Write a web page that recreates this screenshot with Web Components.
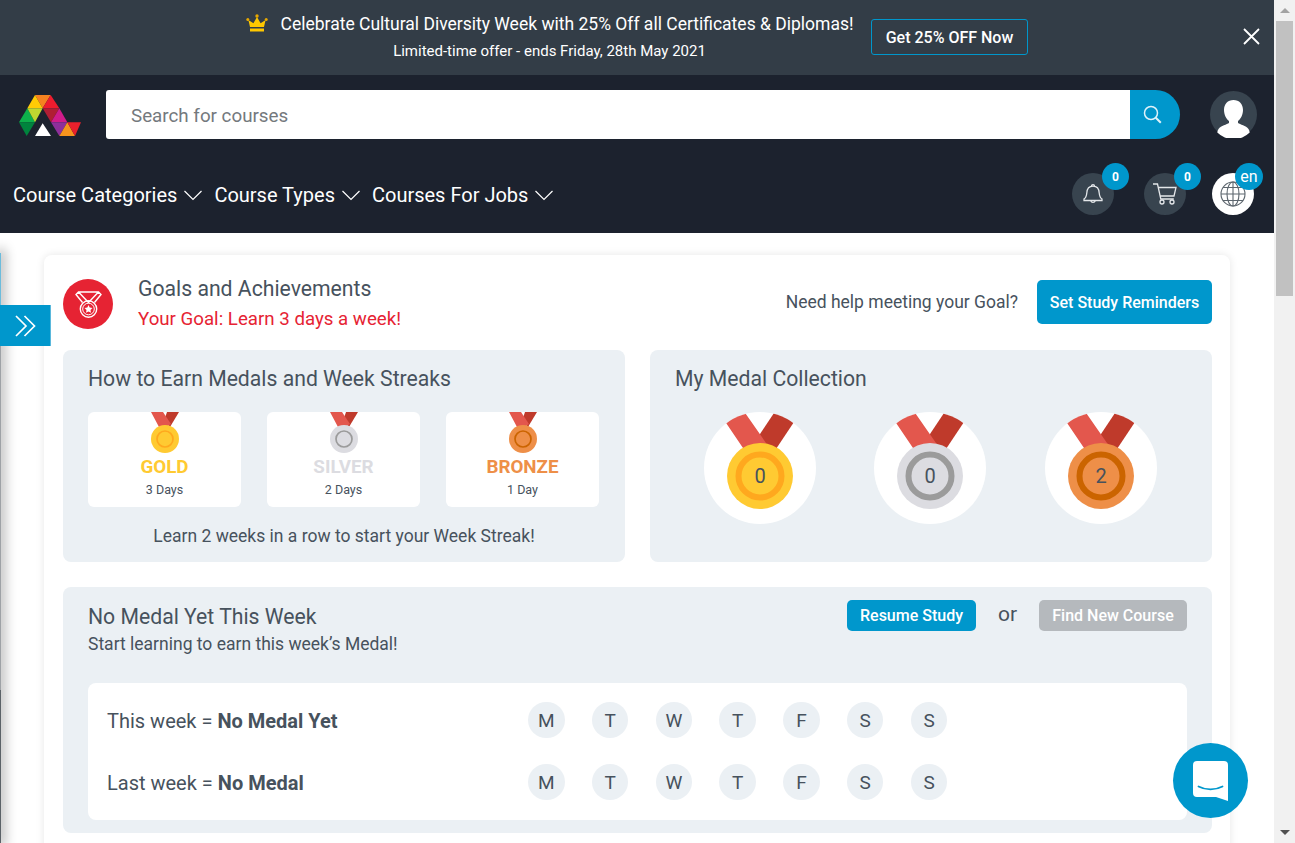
<!DOCTYPE html>
<html lang="en">
<head>
<meta charset="utf-8">
<title>Goals and Achievements</title>
<style>
  html, body { margin: 0; height: 100%; overflow: hidden; background: #fff; }
  body { font-family: Roboto, "Liberation Sans", sans-serif; color: #47525d; }
</style>
</head>
<body>
<app-shell>
  <promo-bar></promo-bar>
  <site-header></site-header>
  <goals-card></goals-card>
</app-shell>

<script>
const icon = {
  chevron: '<svg width="18" height="11" viewBox="0 0 18 11" fill="none" stroke="#fff" stroke-width="1.2"><path d="M.5 1L9 9.500 17.500 1"/></svg>',
  crown: '<svg width="22" height="18" viewBox="0 0 22 18"><path fill="#ffc800" d="M11 3l3.600 6.200L19.600 6 18 13H4L2.400 6l5 3.200z"/><rect x="4" y="14.500" width="14" height="3" fill="#ffc800"/><circle cx="11" cy="2" r="1.700" fill="#e8a800"/><circle cx="1.800" cy="5.500" r="1.500" fill="#e8a800"/><circle cx="20.200" cy="5.500" r="1.500" fill="#e8a800"/></svg>',
  close: '<svg width="17" height="17" viewBox="0 0 17 17" stroke="#fff" stroke-width="1.800"><path d="M1 1l15 15M16 1L1 16"/></svg>',
  search: '<svg width="19" height="19" viewBox="0 0 19 19" fill="none" stroke="#dff2fa" stroke-width="1.500"><circle cx="8" cy="8" r="6.500"/><path d="M12.800 12.800l5 5" stroke-width="2"/></svg>',
  user: '<svg width="47" height="47" viewBox="0 0 47 47"><circle cx="23.500" cy="23.500" r="23.500" fill="#38444f"/><path fill="#fff" d="M23.500 9c5.800 0 9.500 4 9.500 10 0 5-2.500 9-5 11v2c2 1.500 8 2.500 10.500 6 .8 1.200 1 2.500 1.200 3.500a23 23 0 0 1-32.400 0c.2-1 .4-2.300 1.200-3.500 2.500-3.500 8.500-4.500 10.500-6v-2c-2.500-2-5-6-5-11 0-6 3.700-10 9.500-10z"/></svg>',
  bell: '<svg width="20" height="23" viewBox="0 0 20 23" fill="none" stroke="#e4e7ea" stroke-width="1.300"><path d="M1 17.500h18v-1.500c-2-1-2.500-3-2.800-6C16 6 14 3.200 10 3.200S4 6 3.800 10C3.500 13 3 15 1 16z"/><path d="M8.500 3.200c0-2.200 3-2.200 3 0M7.800 17.700a2.300 2.300 0 0 0 4.400 0"/></svg>',
  cart: '<svg width="24" height="22" viewBox="0 0 24 22" fill="none" stroke="#e4e7ea" stroke-width="1.300"><path d="M0 1h4.500l3.300 15h13M5.200 4.500H23l-2 8.500H7.200"/><circle cx="9" cy="19" r="2"/><circle cx="19" cy="19" r="2"/></svg>',
  globe: '<svg width="26" height="26" viewBox="0 0 26 26" fill="none" stroke="#5d666e" stroke-width="1.100"><circle cx="13" cy="13" r="12"/><ellipse cx="13" cy="13" rx="6" ry="12"/><path d="M13 1v24M1 13h24M3 6.500h20M3 19.500h20"/></svg>',
  arrows: '<svg width="21" height="22" viewBox="0 0 21 22" fill="none" stroke="#fff" stroke-width="1.700"><path d="M1 1l10 10L1 21M9.500 1l10 10-10 10"/></svg>',
  badge: '<svg width="27" height="27" viewBox="0 0 27 27" fill="none" stroke="#fff" stroke-width="1.400"><path d="M7.500 11.500L1 3.500 3.500 1h20L26 3.500l-6.500 8M3.500 1l10 10.500L23.500 1"/><circle cx="13.500" cy="18" r="8.200"/><circle cx="13.500" cy="18" r="5.800" stroke-width="1"/><path fill="#fff" stroke="none" d="M13.500 14l1.200 2.500 2.800.4-2 2 .5 2.800-2.500-1.300-2.500 1.300.5-2.800-2-2 2.800-.4z"/></svg>',
  chat: '<svg width="35" height="40" viewBox="0 0 35 40"><path fill="#fff" d="M4 0h27a4 4 0 0 1 4 4v36l-12-4H4a4 4 0 0 1-4-4V4a4 4 0 0 1 4-4z"/><path fill="none" stroke="#0097cc" stroke-width="1.800" stroke-linecap="round" d="M5.500 25.500c7 3.800 17 3.800 24 0"/></svg>',
  logo: '<svg width="62" height="41" viewBox="57 285 186 123"><path fill="#f58220" d="M105 285h47l-24 40z"/><path fill="#ffcb05" d="M105 285l-23 40h46z"/><path fill="#ed1c2e" d="M152 285l-24 40h50z"/><path fill="#0db04b" d="M82 325l-25 42h48z"/><path fill="#bfd730" d="M82 325h46l-23 42z"/><path fill="#b01e34" d="M128 325h50l-25 42z"/><path fill="#d01c8b" d="M178 325l-25 42h49z"/><path fill="#00843d" d="M57 367h48l-25 41z"/><path fill="#8e2f9b" d="M153 367h49l-24 41z"/><path fill="#f7941d" d="M202 367l-24 41h47z"/><path fill="#e8212c" d="M202 367h41l-18 41z"/><path fill="#fff" d="M128 370l-23 38h48z"/></svg>'
};

function define(name, html) {
  customElements.define(name, class extends HTMLElement {
    constructor() {
      super();
      this.attachShadow({ mode: 'open' });
    }
    connectedCallback() {
      this.shadowRoot.innerHTML = typeof html === 'function' ? html(this) : html;
    }
  });
}

/* outer frame: page column + fake scrollbar */
define('app-shell', `
  <style>
    :host { display: flex; height: 843px; overflow: hidden; position: relative; }
    main { width: 1274px; flex: none; position: relative; overflow: hidden; }
    aside { width: 21px; background: #f1f1f1; display: flex; flex-direction: column; align-items: center; }
    .thumb { width: 17px; height: 275px; background: #c1c1c1; }
    .arrow { height: 21px; width: 21px; display: flex; align-items: center; justify-content: center; }
    .arrow i { border-left: 5px solid transparent; border-right: 5px solid transparent; }
    .up i { border-bottom: 5px solid #a3a3a3; }
    .down { margin-top: auto; }
    .down i { border-top: 5px solid #505050; }
    /* edge of the closed side drawer */
    .rail { position: absolute; left: 0; top: 253px; bottom: 0; width: 1px;
      background: linear-gradient(180deg, #6cbcdc 0 52px, #9ea2a6 52px 437px, #5b6268 437px);
      box-shadow: 0 0 12px 4px rgba(0,0,0,.3); }
    .toggle { position: absolute; left: 0; top: 305px; width: 51px; height: 41px; background: #0097cc; border-right: 1px solid #5ab8dc; box-sizing: border-box; display: flex; align-items: center; justify-content: center; }
    .chat { position: absolute; left: 1173px; top: 743px; width: 75px; height: 75px; border-radius: 50%; background: #0097cc; display: flex; align-items: center; justify-content: center; }
  </style>
  <main>
    <slot></slot>
    <div class="rail"></div>
    <div class="toggle">${icon.arrows}</div>
    <div class="chat">${icon.chat}</div>
  </main>
  <aside>
    <div class="arrow up"><i></i></div>
    <div class="thumb"></div>
    <div class="arrow down"><i></i></div>
  </aside>
`);

define('promo-bar', `
  <style>
    :host { display: flex; height: 75px; background: #333d47; color: #fff; align-items: center; position: relative; box-sizing: border-box; padding-left: 246px; }
    .copy { width: 607px; display: flex; flex-direction: column; align-items: center; gap: 7px; margin-top: -2px; }
    .line { display: flex; align-items: center; gap: 13px; }
    .line svg { display: block; margin-top: -2px; }
    .head { font-size: 17.500px; line-height: 22px; white-space: nowrap; }
    .sub { font-size: 15px; line-height: 18px; white-space: nowrap; }
    .cta { width: 157px; height: 36px; box-sizing: border-box; border: 1px solid #0097cc; border-radius: 3px; display: flex; align-items: center; justify-content: center; font-size: 16px; font-weight: 500; margin-left: 18px; margin-top: -1px; }
    .x { position: absolute; left: 1243px; top: 28px; display: flex; }
  </style>
  <div class="copy">
    <div class="line">${icon.crown}<div class="head">Celebrate Cultural Diversity Week with 25% Off all Certificates &amp; Diplomas!</div></div>
    <div class="sub">Limited-time offer - ends Friday, 28th May 2021</div>
  </div>
  <div class="cta">Get 25% OFF Now</div>
  <span class="x">${icon.close}</span>
`);

define('nav-item', `
  <style>
    :host { display: inline-flex; align-items: center; gap: 7px; font-size: 20px; color: #fff; white-space: nowrap; padding-top: 2px; }
    svg { display: block; margin-top: 1px; }
  </style>
  <slot></slot>${icon.chevron}
`);

define('icon-badge', el => {
  const light = el.getAttribute('tone') === 'light';
  return `
  <style>
    :host { display: block; position: relative; width: 42px; height: 42px; }
    .disc { width: 42px; height: 42px; border-radius: 50%; background: ${light ? '#fff' : '#38444f'}; display: flex; align-items: center; justify-content: center; }
    .count { position: absolute; left: ${light ? 23 : 30}px; top: -10px; width: ${light ? 28 : 27}px; height: 27px; border-radius: 50%; background: #0097cc; color: #fff; display: flex; align-items: center; justify-content: center; font-size: ${light ? '16px' : '12px'}; font-weight: ${light ? 400 : 700}; }
  </style>
  <div class="disc">${icon[el.getAttribute('icon')]}</div>
  <span class="count">${el.getAttribute('count')}</span>`;
});

define('site-header', `
  <style>
    :host { display: block; height: 158px; background: #1c222e; box-sizing: border-box; padding: 15px 17px 0 13px; }
    .top { display: flex; align-items: center; height: 49px; }
    .logo { display: flex; width: 93px; padding-left: 6px; padding-top: 2px; box-sizing: border-box; }
    .search { display: flex; height: 49px; width: 1074px; }
    .field { flex: 1; background: #fff; border-radius: 3px 0 0 3px; color: #74797d; font-size: 18.800px; display: flex; align-items: center; padding: 2px 0 0 25px; }
    .go { width: 50px; background: #0097cc; border-radius: 0 25px 25px 0; display: flex; align-items: center; justify-content: center; padding-right: 5px; box-sizing: border-box; }
    .me { display: flex; margin-left: 30px; }
    .bottom { display: flex; align-items: center; margin-top: 34px; height: 42px; }
    .links { display: flex; gap: 12px; }
    .tools { display: flex; gap: 26px; margin-left: auto; margin-right: 3px; }
    .tools :first-child { margin-right: 4px; }
  </style>
  <div class="top">
    <span class="logo">${icon.logo}</span>
    <div class="search">
      <div class="field">Search for courses</div>
      <div class="go">${icon.search}</div>
    </div>
    <span class="me">${icon.user}</span>
  </div>
  <div class="bottom">
    <div class="links">
      <nav-item>Course Categories</nav-item>
      <nav-item>Course Types</nav-item>
      <nav-item>Courses For Jobs</nav-item>
    </div>
    <div class="tools">
      <icon-badge icon="bell" count="0"></icon-badge>
      <icon-badge icon="cart" count="0"></icon-badge>
      <icon-badge icon="globe" count="en" tone="light"></icon-badge>
    </div>
  </div>
`);

const tones = {
  gold:   { face: '#ffca32', ring: '#ffa81e' },
  silver: { face: '#dcdce1', ring: '#9b9b9b' },
  bronze: { face: '#ee8f48', ring: '#cb6400' }
};

/* big medal on a white disc, value in the middle */
define('medal-disc', el => {
  const t = tones[el.getAttribute('tone')];
  const id = 'c' + el.getAttribute('tone');
  return `
  <style>
    :host { display: block; position: relative; width: 112px; height: 112px; }
    svg { display: block; }
    span { position: absolute; left: 0; right: 0; top: 52px; height: 24px; line-height: 24px; text-align: center; font-size: 20px; color: #47525d; }
  </style>
  <svg width="112" height="112" viewBox="0 0 112 112">
    <clipPath id="${id}"><circle cx="56" cy="56" r="56"/></clipPath>
    <circle cx="56" cy="56" r="56" fill="#fff"/>
    <g clip-path="url(#${id})">
      <path fill="#bf3a2b" d="M74-5l20 9-22 33H56V22z"/>
      <path fill="#e3574d" d="M17 3.500L37-5l25 36 4 5H39z"/>
    </g>
    <circle cx="56" cy="64" r="33" fill="${t.face}"/>
    <circle cx="56" cy="64" r="21.500" fill="none" stroke="${t.ring}" stroke-width="6"/>
  </svg>
  <span>${el.getAttribute('value')}</span>`;
});

/* white tile with a small medal hanging from its top edge */
define('medal-tile', el => {
  const t = tones[el.getAttribute('tone')];
  return `
  <style>
    :host { display: flex; flex-direction: column; align-items: center; width: 153px; height: 95px; background: #fff; border-radius: 6px; }
    svg { display: block; flex: none; }
    b { font-size: 18.800px; line-height: 22px; font-weight: 700; margin-top: 2px; color: ${t.face}; }
    small { font-size: 12.500px; line-height: 16px; margin-top: 4px; color: #47525d; }
  </style>
  <svg width="30" height="42" viewBox="0 0 30 42">
    <path fill="#bf3a2b" d="M17 0h12l-9 15-6-6z"/>
    <path fill="#e3574d" d="M1 0h12l8 12-5 3H9z"/>
    <circle cx="15" cy="27" r="14" fill="${t.face}"/>
    <circle cx="15" cy="27" r="8" fill="none" stroke="${t.ring}" stroke-width="1.700"/>
  </svg>
  <b>${el.getAttribute('label')}</b>
  <small>${el.getAttribute('days')}</small>`;
});

define('week-row', el => `
  <style>
    :host { display: flex; align-items: center; height: 36px; font-size: 20px; color: #47525d; }
    .label { width: 421px; flex: none; white-space: nowrap; padding-top: 2px; }
    b { font-weight: 700; }
    .days { display: flex; gap: 27.300px; }
    .days span { width: 36.500px; height: 36px; border-radius: 50%; background: #ebf0f4; display: flex; align-items: center; justify-content: center; font-size: 19px; }
  </style>
  <div class="label">${el.getAttribute('label')} = <b>${el.getAttribute('value')}</b></div>
  <div class="days">${['M','T','W','T','F','S','S'].map(d => `<span>${d}</span>`).join('')}</div>
`);

define('goals-card', `
  <style>
    :host { display: block; margin: 22px 44px 0 44px; height: 640px; background: #fff; border-radius: 8px; box-shadow: 0 0 8px rgba(0,0,0,.1); box-sizing: border-box; padding: 24px 18px 0 19px; }
    .head { display: flex; align-items: center; height: 50px; }
    .seal { width: 50px; height: 50px; border-radius: 50%; background: #e62333; display: flex; align-items: center; justify-content: center; margin-right: 25px; }
    .names { align-self: flex-start; }
    .title { font-size: 21.200px; line-height: 24px; margin-top: -2px; }
    .goal { font-size: 18.700px; line-height: 22px; color: #e62333; margin-top: 7px; }
    .help { margin: -4px 19px 0 auto; font-size: 17.500px; }
    .btn { display: flex; align-items: center; justify-content: center; background: #0097cc; color: #fff; border-radius: 5px; font-weight: 500; }
    .set { width: 175px; height: 44px; font-size: 16px; margin-top: -4px; }
    .cols { display: grid; grid-template-columns: 562px 562px; gap: 25px; margin-top: 21px; }
    .panel { background: #ebf0f4; border-radius: 8px; box-sizing: border-box; height: 212px; padding: 17px 25px 0; }
    h2 { margin: 0; font-weight: 400; font-size: 21.200px; line-height: 24px; }
    .tiles { display: flex; gap: 26px; margin-top: 21px; }
    .note { text-align: center; font-size: 17.500px; line-height: 22px; margin-top: 18px; }
    .discs { display: flex; justify-content: space-between; margin: 21px 30px 0 29px; }
    .discs :nth-child(2) { margin: 0 .5px 0 -.5px; }
    .week { background: #ebf0f4; border-radius: 8px; margin-top: 25px; height: 246px; box-sizing: border-box; padding: 13px 25px 0; }
    .week-top { display: flex; align-items: flex-start; height: 83px; }
    .week-top .sub { font-size: 17.500px; line-height: 22px; margin-top: 4px; }
    .week-top h2 { margin-top: 5px; }
    .cta { margin-left: auto; display: flex; align-items: center; font-size: 21px; }
    .resume { width: 129px; height: 31px; font-size: 16px; }
    .or { width: 63px; text-align: center; margin-top: -4px; }
    .find { width: 148px; height: 31px; font-size: 16px; background: #b5b9bd; }
    .rows { background: #fff; border-radius: 8px; height: 137px; box-sizing: border-box; padding: 19px 19px 0; display: flex; flex-direction: column; gap: 26px; }
  </style>
  <div class="head">
    <div class="seal">${icon.badge}</div>
    <div class="names">
      <div class="title">Goals and Achievements</div>
      <div class="goal">Your Goal: Learn 3 days a week!</div>
    </div>
    <div class="help">Need help meeting your Goal?</div>
    <div class="btn set">Set Study Reminders</div>
  </div>
  <div class="cols">
    <section class="panel">
      <h2>How to Earn Medals and Week Streaks</h2>
      <div class="tiles">
        <medal-tile tone="gold" label="GOLD" days="3 Days"></medal-tile>
        <medal-tile tone="silver" label="SILVER" days="2 Days"></medal-tile>
        <medal-tile tone="bronze" label="BRONZE" days="1 Day"></medal-tile>
      </div>
      <div class="note">Learn 2 weeks in a row to start your Week Streak!</div>
    </section>
    <section class="panel">
      <h2>My Medal Collection</h2>
      <div class="discs">
        <medal-disc tone="gold" value="0"></medal-disc>
        <medal-disc tone="silver" value="0"></medal-disc>
        <medal-disc tone="bronze" value="2"></medal-disc>
      </div>
    </section>
  </div>
  <section class="week">
    <div class="week-top">
      <div>
        <h2>No Medal Yet This Week</h2>
        <div class="sub">Start learning to earn this week’s Medal!</div>
      </div>
      <div class="cta">
        <div class="btn resume">Resume Study</div>
        <div class="or">or</div>
        <div class="btn find">Find New Course</div>
      </div>
    </div>
    <div class="rows">
      <week-row label="This week" value="No Medal Yet"></week-row>
      <week-row label="Last week" value="No Medal"></week-row>
    </div>
  </section>
`);
</script>
</body>
</html>
